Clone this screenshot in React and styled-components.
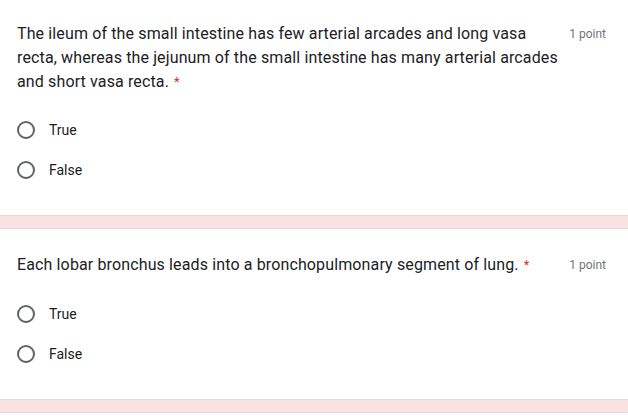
import React from 'react'
import styled, { createGlobalStyle } from 'styled-components'

const GlobalStyle = createGlobalStyle`
    html, body {
        margin: 0;
        padding: 0;
        background: #FFFFFF;
    }
    body {
        font-family: Roboto, "Noto Sans", Arial, sans-serif;
        color: #202124;
    }
`;

const PageStyled = styled.div`
    width: 628px;
    display: flex;
    flex-direction: column;
`;

const CardStyled = styled.div`
    background: #FFFFFF;
    padding: ${({top}) => top}px 22px 25px 17px;
`;

const HeaderStyled = styled.div`
    display: flex;
    justify-content: space-between;
    align-items: flex-start;
    gap: 4px;
    .question {
        flex: 1;
        font-size: 16px;
        line-height: 24px;
        letter-spacing: 0.13px;
        color: #202124;
    }
    .required {
        color: #d93025;
        font-size: 13px;
        margin-left: 5px;
        vertical-align: 1px;
    }
    .points {
        flex: none;
        font-size: 12px;
        line-height: 24px;
        color: #70757a;
    }
`;

const OptionsStyled = styled.div`
    margin-top: ${({spacing}) => spacing}px;
    display: flex;
    flex-direction: column;
`;

const OptionStyled = styled.label`
    height: 40px;
    display: flex;
    align-items: center;
    font-size: 14px;
    color: #202124;
    .circle {
        box-sizing: border-box;
        width: 18px;
        height: 18px;
        border: 2px solid #5f6368;
        border-radius: 50%;
        margin-right: 14px;
    }
`;

const DividerStyled = styled.div`
    height: 12px;
    background: #fbe2e2;
    border-top: 1px solid #dadce0;
    border-bottom: 1px solid #dadce0;
`;

const Question = ({title, points, top, spacing, options}) => {
    return (
        <CardStyled top={top}>
            <HeaderStyled>
                <div className="question">
                    {title}
                    <span className="required">*</span>
                </div>
                <div className="points">{points}</div>
            </HeaderStyled>
            <OptionsStyled spacing={spacing}>
                {options.map((option) => (
                    <OptionStyled key={option}>
                        <span className="circle" />
                        {option}
                    </OptionStyled>
                ))}
            </OptionsStyled>
        </CardStyled>
    )
}

const App = () => {
    return (
        <PageStyled>
            <GlobalStyle />
            <Question
                top={22}
                spacing={16}
                title="The ileum of the small intestine has few arterial arcades and long vasa recta, whereas the jejunum of the small intestine has many arterial arcades and short vasa recta."
                points="1 point"
                options={['True', 'False']}
            />
            <DividerStyled />
            <Question
                top={24}
                spacing={17}
                title="Each lobar bronchus leads into a bronchopulmonary segment of lung."
                points="1 point"
                options={['True', 'False']}
            />
            <DividerStyled />
        </PageStyled>
    )
}

export default App
